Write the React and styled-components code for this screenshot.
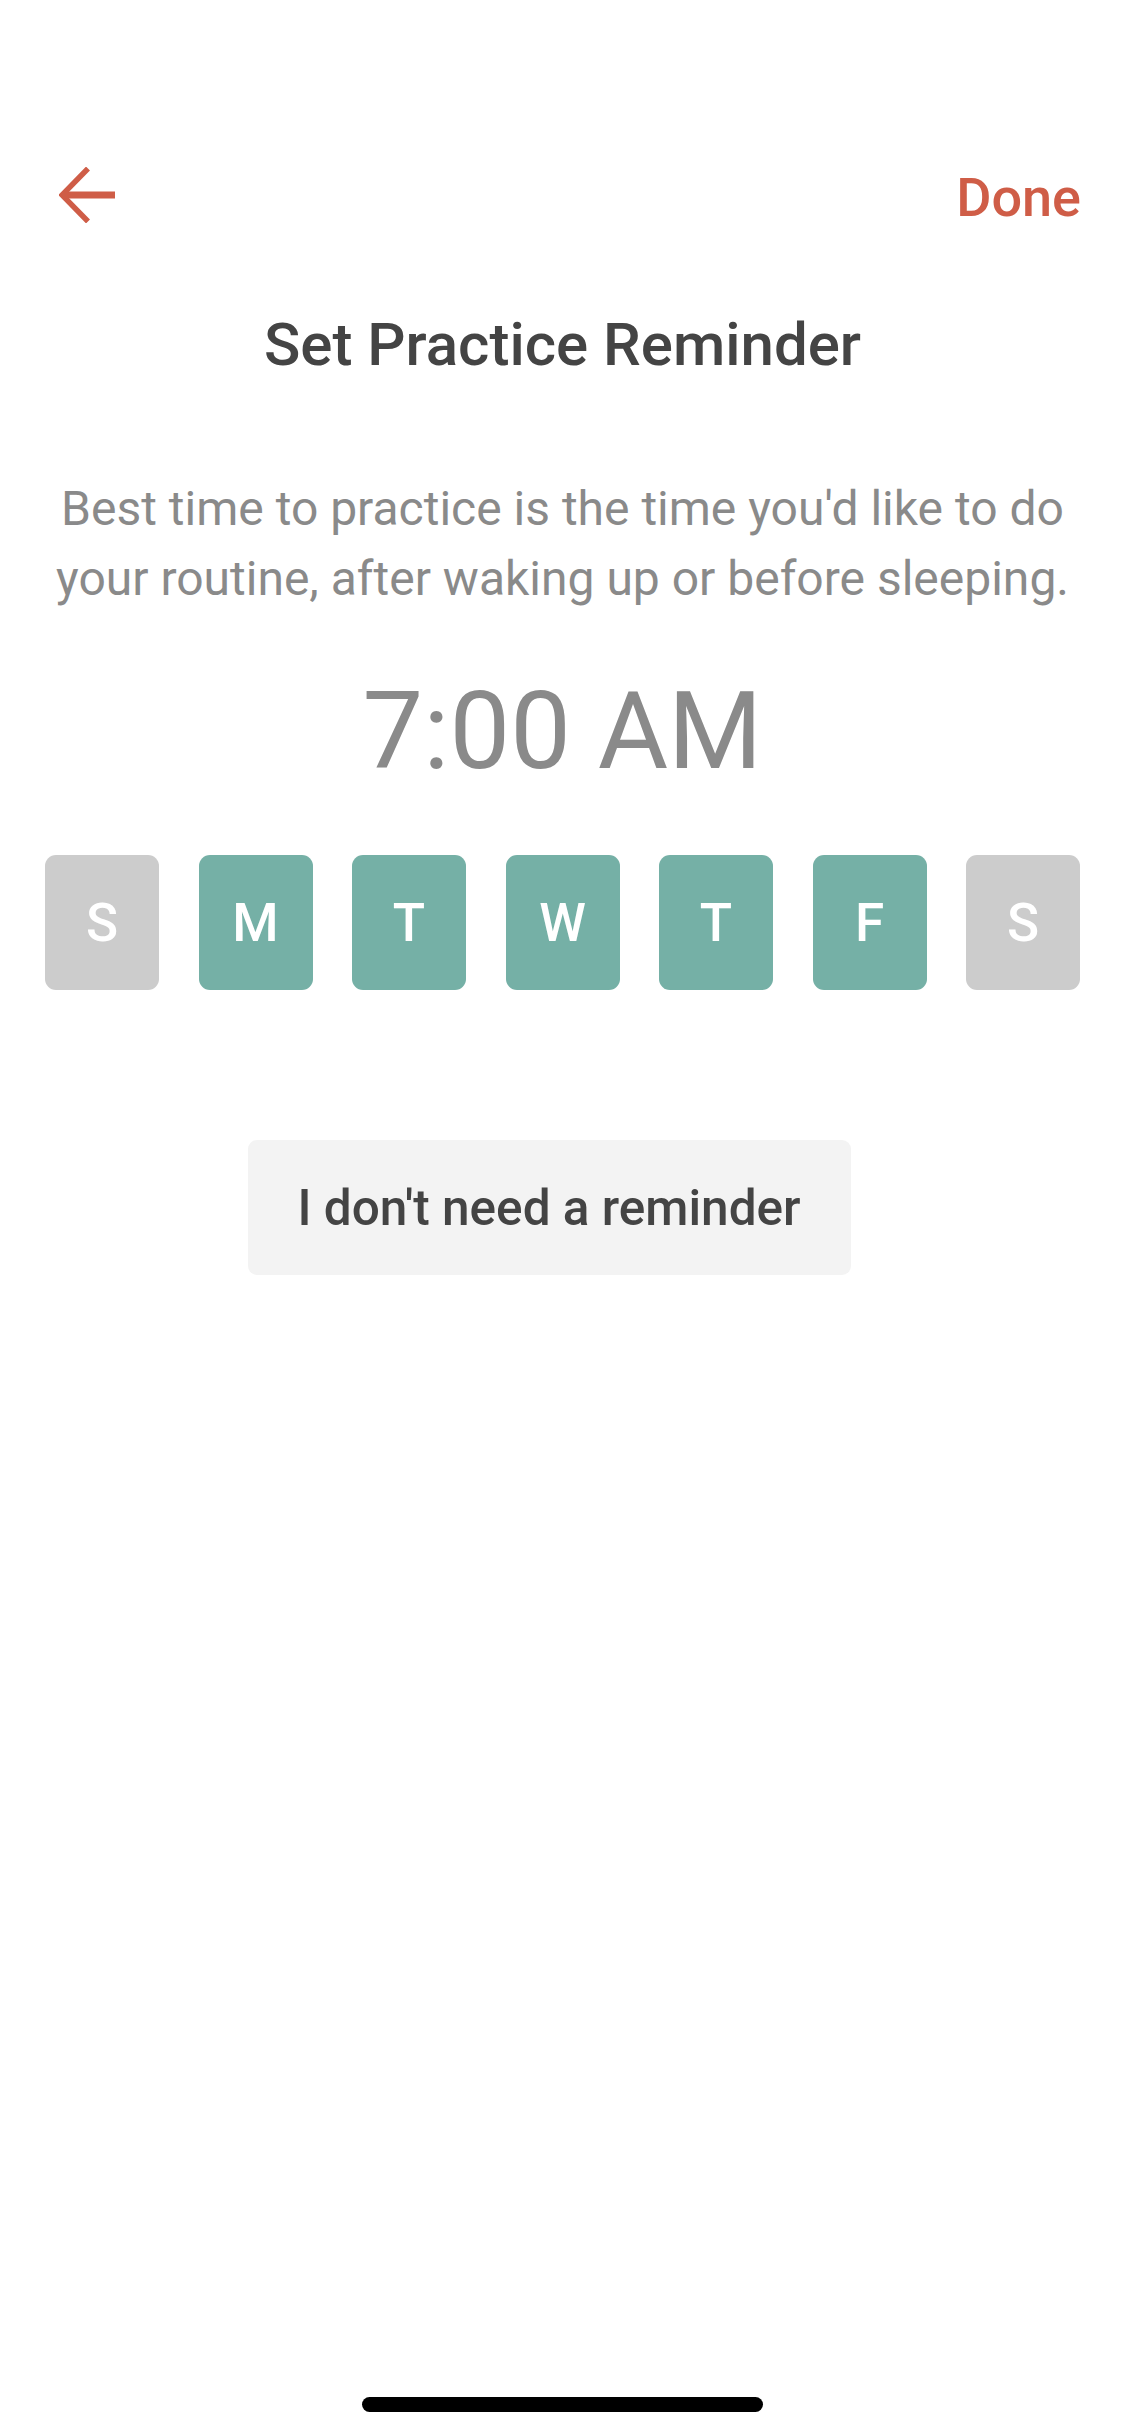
import React from "react"
import styled, { createGlobalStyle } from "styled-components"

const days = [
  { id: 0, letter: "S", on: false },
  { id: 1, letter: "M", on: true },
  { id: 2, letter: "T", on: true },
  { id: 3, letter: "W", on: true },
  { id: 4, letter: "T", on: true },
  { id: 5, letter: "F", on: true },
  { id: 6, letter: "S", on: false },
]

const GlobalStyle = createGlobalStyle`
  html, body {
    margin: 0;
    padding: 0;
    background: #ffffff;
  }
  body {
    font-family: Roboto, "Noto Sans", sans-serif;
  }
`

const Screen = styled.div`
  width: 1125px;
  min-height: 2436px;
  display: flex;
  flex-direction: column;
  align-items: stretch;
  box-sizing: border-box;
  background: #ffffff;
`

const Header = styled.header`
  display: flex;
  justify-content: space-between;
  align-items: flex-start;
  height: 63px;
  padding: 167px 44px 0 59px;
`

const BackButton = styled.button`
  border: 0;
  background: none;
  padding: 0;
  width: 58px;
  height: 56px;
  display: block;
  cursor: pointer;
`

const DoneButton = styled.button`
  border: 0;
  background: none;
  padding: 0;
  margin-top: 1px;
  font-family: Roboto, sans-serif;
  font-size: 54px;
  line-height: 60px;
  font-weight: 500;
  color: #cf5d47;
  cursor: pointer;
`

const Title = styled.h1`
  margin: 80px 0 0;
  text-align: center;
  font-size: 60px;
  line-height: 70px;
  font-weight: 500;
  color: #444444;
`

const Intro = styled.p`
  margin: 94px 0 0;
  padding: 0 40px;
  text-align: center;
  font-size: 48px;
  line-height: 70px;
  font-weight: 400;
  color: #8a8a8a;
`

const Time = styled.div`
  margin-top: 57px;
  text-align: center;
  font-size: 108px;
  line-height: 120px;
  font-weight: 400;
  color: #8a8a8a;
`

const Days = styled.div`
  margin-top: 64px;
  padding: 0 45px;
  display: flex;
  justify-content: space-between;
`

const Day = styled.button`
  width: 114px;
  height: 135px;
  border: 0;
  border-radius: 11px;
  padding: 0;
  display: flex;
  align-items: center;
  justify-content: center;
  background: ${props => (props.$on ? "#75b0a6" : "#cccccc")};
  color: #ffffff;
  font-family: Roboto, sans-serif;
  font-size: 53px;
  font-weight: 500;
`

const SkipRow = styled.div`
  margin-top: 150px;
  display: flex;
  justify-content: center;
  padding-right: 27px;
`

const SkipButton = styled.button`
  width: 603px;
  height: 135px;
  border: 0;
  border-radius: 9px;
  background: #f3f3f3;
  color: #444444;
  font-family: Roboto, sans-serif;
  font-size: 49.5px;
  font-weight: 500;
  padding: 0;
`

const HomeIndicator = styled.div`
  margin: auto auto 24px;
  width: 401px;
  height: 15px;
  border-radius: 8px;
  background: #000000;
`

const BackArrow = () => (
  <svg width="58" height="56" viewBox="0 0 58 56" fill="none">
    <path
      d="M29 1.5 L3 28 L29 54.5"
      stroke="#cf5d47"
      strokeWidth="5.5"
      strokeLinecap="butt"
      strokeLinejoin="miter"
    />
    <path d="M4 28 H56" stroke="#cf5d47" strokeWidth="7" />
  </svg>
)

const App = () => (
  <Screen>
    <GlobalStyle />
    <Header>
      <BackButton aria-label="Back">
        <BackArrow />
      </BackButton>
      <DoneButton>Done</DoneButton>
    </Header>
    <Title>Set Practice Reminder</Title>
    <Intro>
      Best time to practice is the time you'd like to do your routine, after
      waking up or before sleeping.
    </Intro>
    <Time>7:00 AM</Time>
    <Days>
      {days.map(day => (
        <Day key={day.id} $on={day.on}>
          {day.letter}
        </Day>
      ))}
    </Days>
    <SkipRow>
      <SkipButton>I don't need a reminder</SkipButton>
    </SkipRow>
    <HomeIndicator />
  </Screen>
)

export default App
